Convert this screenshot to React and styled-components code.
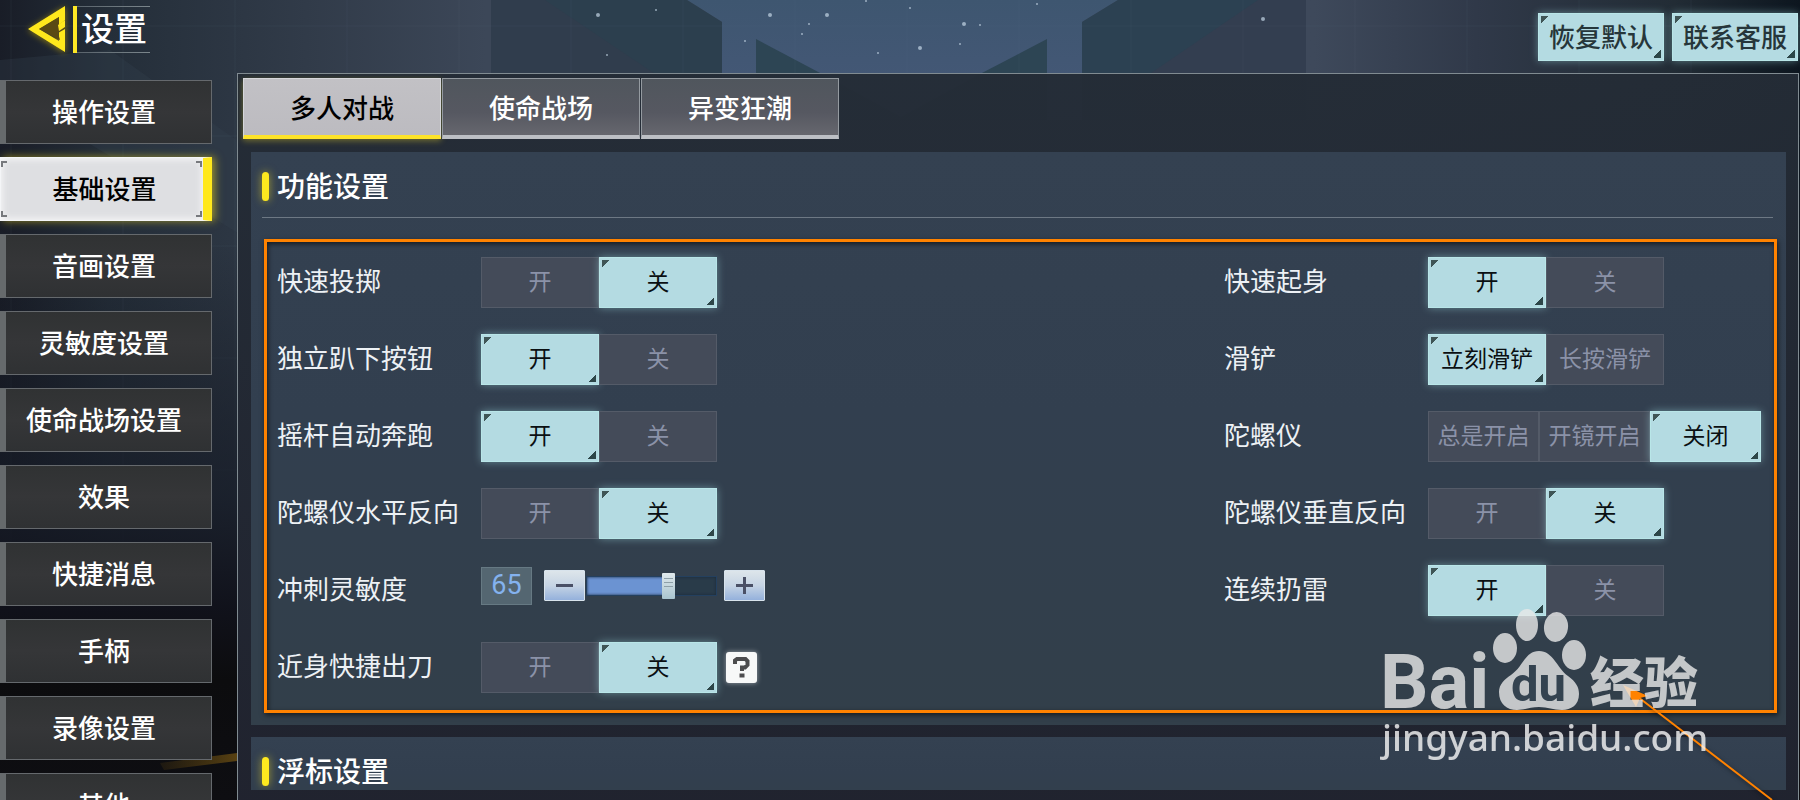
import React, { useId, useState } from "react";
import styled, { createGlobalStyle, css } from "styled-components";

const Global = createGlobalStyle`
  *, *::before, *::after { box-sizing: border-box; }
  body {
    margin: 0;
    background: #11141c;
    color: #fff;
    font-family: "Noto Sans CJK SC", sans-serif;
    overflow: hidden;
  }
  button { font: inherit; color: inherit; margin: 0; padding: 0; cursor: pointer; }
`;

const Page = styled.div`
  position: relative;
  z-index: 0;
  display: flex;
  flex-direction: column;
  height: 100vh;
  overflow: hidden;
`;

const Backdrop = styled.svg`
  position: absolute;
  inset: 0;
  z-index: -1;
  width: 100%;
  height: 100%;
`;

const Header = styled.header`
  display: flex;
  align-items: flex-start;
  justify-content: space-between;
  height: 73px;
  flex: none;
  padding: 0 2px 0 22px;
`;

const BackButton = styled.button`
  display: flex;
  align-items: center;
  gap: 2px;
  height: 58px;
  background: none;
  border: 0;
`;

const Title = styled.h1`
  width: 77px;
  height: 47px;
  margin: 0;
  padding-left: 1px;
  border-left: 4px solid #fde725;
  font-size: 33px;
  line-height: 42px;
  font-weight: 500;
  white-space: nowrap;
  background:
    linear-gradient(90deg, #59636b, #7b868c) top / 100% 1px no-repeat,
    linear-gradient(90deg, #59636b, #7b868c) bottom / 100% 1px no-repeat;
`;

const HeaderActions = styled.div`
  display: flex;
  gap: 8px;
  padding-top: 13px;
`;

const lit = css`
  color: #0a0f12;
  background:
    linear-gradient(135deg, #3f5556 50%, transparent 50%) 2px 2px / 8px 8px no-repeat,
    linear-gradient(315deg, #2d4648 50%, transparent 50%) calc(100% - 2px) calc(100% - 2px) / 8px 8px no-repeat,
    #b4dbe2;
  border: 1px solid #b9e6e8;
  box-shadow: 0 0 8px rgba(165, 225, 230, 0.45);
`;

const ActionButton = styled.button`
  ${lit}
  && { color: #26363a; }
  width: 126px;
  height: 48px;
  padding-bottom: 2px;
  font-size: 26px;
  line-height: 44px;
  font-weight: 500;
  white-space: nowrap;
`;

const Body = styled.div`
  display: flex;
  flex: 1;
  min-height: 0;
  gap: 25px;
`;

const Sidebar = styled.nav`
  display: flex;
  flex-direction: column;
  gap: 13px;
  width: 212px;
  flex: none;
  padding-top: 7px;
`;

const SideItem = styled.button`
  position: relative;
  height: 64px;
  flex: none;
  padding: 0 9px 3px 0;
  font-size: 26px;
  line-height: 58px;
  font-weight: 500;
  white-space: nowrap;
  border: 1px solid #65696d;
  border-left: 6px solid #666a6c;
  background: linear-gradient(#303233, #353638 50%, #2f3133);
  ${(p) =>
    p.$active &&
    css`
      color: #000;
      border: 1px solid #f4f5f7;
      border-right: 9px solid #ffe81c;
      padding: 0 0 3px 5px;
      background: #dedfe2;
      box-shadow: 3px 0 8px rgba(255, 228, 30, 0.5), inset 0 0 8px #fff;
    `}
`;

const Brackets = styled.svg`
  position: absolute;
  inset: 3px 1px 3px 0;
  width: calc(100% - 1px);
  height: calc(100% - 6px);
`;

const Panel = styled.main`
  display: flex;
  flex-direction: column;
  flex: 1;
  min-width: 0;
  margin-right: 1px;
  padding: 4px 12px 10px 5px;
  border: 1px solid #808b91;
  border-bottom: 0;
  background: linear-gradient(rgba(36, 44, 54, 0.97), rgba(33, 36, 48, 0.96));
`;

const Tabs = styled.div`
  display: flex;
  gap: 1px;
  flex: none;
`;

const Tab = styled.button`
  width: 198px;
  height: 61px;
  font-size: 26px;
  line-height: 54px;
  font-weight: 500;
  white-space: nowrap;
  border: 1px solid #949aa0;
  border-bottom: 4px solid #bcbfc4;
  background: linear-gradient(#50565d, #565861 60%, #66676e);
  ${(p) =>
    p.$active &&
    css`
      color: #000;
      border-color: #d6d7da;
      border-bottom-color: #fde328;
      background: linear-gradient(#c2c1c5, #bcbbc0);
      box-shadow: 0 2px 6px rgba(253, 227, 40, 0.35);
    `}
`;

const Sections = styled.div`
  display: flex;
  flex-direction: column;
  gap: 12px;
  flex: 1;
  min-height: 0;
  overflow: hidden;
  margin: 13px 0 0 8px;
`;

const Section = styled.section`
  flex: none;
  padding: 0 9px 12px 11px;
  background: linear-gradient(#344151, #323f4f 45%, #323f4a);
`;

const SectionHeader = styled.header`
  display: flex;
  align-items: center;
  gap: 8px;
  height: 66px;
  margin-right: 4px;
  padding-top: 3px;
  border-bottom: 1px solid #6d7884;
  &::before {
    content: "";
    width: 7px;
    height: 29px;
    border-radius: 4px;
    background: #fee91f;
    box-shadow: 0 0 8px rgba(254, 225, 31, 0.55);
  }
`;

const SectionTitle = styled.h2`
  margin: 0;
  padding-bottom: 3px;
  font-size: 28px;
  line-height: 36px;
  font-weight: 500;
`;

const Settings = styled.div`
  display: grid;
  grid-template-columns: minmax(0, 1fr) 540px;
  grid-auto-rows: 51px;
  row-gap: 26px;
  margin: 21px 0 0 2px;
  padding: 15px 10px 17px;
  border: 3px solid #ff8200;
  box-shadow: 1px 2px 5px rgba(0, 0, 0, 0.6), inset 1px 2px 5px rgba(0, 0, 0, 0.6);
`;

const Row = styled.div`
  display: flex;
  align-items: center;
  min-width: 0;
`;

const RowLabel = styled.label`
  width: 204px;
  flex: none;
  padding-bottom: 5px;
  font-size: 26px;
  line-height: 36px;
  font-weight: 400;
  color: #edf1f5;
  white-space: nowrap;
`;

const Segments = styled.div`
  display: flex;
`;

const Segment = styled.label`
  position: relative;
  width: ${(p) => p.$width}px;
  height: 51px;
  text-align: center;
  font-size: 23px;
  line-height: 45px;
  white-space: nowrap;
  color: #8b92a8;
  background: #444b59;
  border: 1px solid #545b68;
  ${(p) => p.$on && lit}
`;

const Radio = styled.input`
  position: absolute;
  inset: 0;
  width: 100%;
  height: 100%;
  margin: 0;
  appearance: none;
  cursor: pointer;
`;

const SliderGroup = styled.div`
  display: flex;
  align-items: center;
  padding-bottom: 10px;
`;

const ValueBox = styled.output`
  width: 51px;
  height: 38px;
  margin-right: 12px;
  text-align: center;
  font-family: Roboto, "Liberation Sans", sans-serif;
  font-size: 27px;
  line-height: 35px;
  color: #84b2ee;
  background: #546671;
  border: 1px solid #667983;
`;

const StepButton = styled.button`
  display: grid;
  place-items: center;
  width: 41px;
  height: 31px;
  border: 1px solid #d8e3ec;
  border-radius: 1px;
  background: linear-gradient(#dde5ea, #c6d4e4 50%, #94b1dc);
`;

const Range = styled.input`
  appearance: none;
  width: 131px;
  height: 26px;
  margin: 0 7px 0 1px;
  background: transparent;
  &::-webkit-slider-runnable-track {
    height: 20px;
    border: 1px solid #24405f;
    box-shadow: inset 0 0 3px #1b2a3a;
    background: linear-gradient(90deg, #6b93d2 ${(p) => p.value}%, #293b49 ${(p) => p.value}%);
  }
  &::-webkit-slider-thumb {
    appearance: none;
    width: 13px;
    height: 26px;
    margin-top: -4px;
    border-radius: 1px;
    background:
      linear-gradient(#8ea0a8, #8ea0a8) center 5px / 9px 1px no-repeat,
      linear-gradient(#8ea0a8, #8ea0a8) center 9px / 9px 1px no-repeat,
      linear-gradient(#8ea0a8, #8ea0a8) center 13px / 9px 1px no-repeat,
      linear-gradient(#e0e9ec, #a9c4cf);
  }
`;

const HelpButton = styled.button`
  display: grid;
  place-items: center;
  width: 31px;
  height: 31px;
  margin-left: 9px;
  border: 0;
  border-radius: 3px;
  background: #f7f8f8;
  box-shadow: 0 0 5px rgba(255, 255, 255, 0.5);
`;

const Overlay = styled.svg`
  position: absolute;
  right: 0;
  bottom: 0;
  pointer-events: none;
`;

const menu = ["操作设置", "基础设置", "音画设置", "灵敏度设置", "使命战场设置", "效果", "快捷消息", "手柄", "录像设置", "其他"];
const modes = ["多人对战", "使命战场", "异变狂潮"];
const onOff = ["开", "关"];
const settings = [
  { label: "快速投掷", options: onOff, initial: 1 },
  { label: "快速起身", options: onOff, initial: 0 },
  { label: "独立趴下按钮", options: onOff, initial: 0 },
  { label: "滑铲", options: ["立刻滑铲", "长按滑铲"], initial: 0 },
  { label: "摇杆自动奔跑", options: onOff, initial: 0 },
  { label: "陀螺仪", options: ["总是开启", "开镜开启", "关闭"], initial: 2 },
  { label: "陀螺仪水平反向", options: onOff, initial: 1 },
  { label: "陀螺仪垂直反向", options: onOff, initial: 1 },
  { label: "冲刺灵敏度", slider: 65 },
  { label: "连续扔雷", options: onOff, initial: 0 },
  { label: "近身快捷出刀", options: onOff, initial: 1, help: true },
];

const stars = [
  [598, 15], [656, 10], [607, 55], [770, 15], [809, 24], [802, 34], [827, 15], [866, 1], [745, 41],
  [964, 24], [980, 25], [1037, 4], [920, 48], [910, 8], [878, 53], [1263, 19], [960, 44],
];

function Scene() {
  return (
    <Backdrop viewBox="0 0 1800 800" preserveAspectRatio="none" aria-hidden="true">
      <defs>
        <linearGradient id="wall" x1="0" x2="1">
          <stop offset="0" stopColor="#191d27" />
          <stop offset="0.06" stopColor="#242e39" />
          <stop offset="0.17" stopColor="#313b49" />
          <stop offset="0.27" stopColor="#3c4758" />
          <stop offset="0.73" stopColor="#3e495b" />
          <stop offset="0.82" stopColor="#303949" />
          <stop offset="0.93" stopColor="#222c35" />
          <stop offset="1" stopColor="#0d161f" />
        </linearGradient>
        <linearGradient id="sky" x1="0" x2="0" y1="0" y2="1">
          <stop offset="0" stopColor="#3e5670" />
          <stop offset="1" stopColor="#465878" />
        </linearGradient>
        <linearGradient id="floor" x1="0" x2="0" y1="0" y2="1">
          <stop offset="0.3" stopColor="#11131b" stopOpacity="0" />
          <stop offset="0.62" stopColor="#151a25" stopOpacity="0.75" />
          <stop offset="0.76" stopColor="#10111a" stopOpacity="0.98" />
          <stop offset="0.85" stopColor="#0c0c0e" />
          <stop offset="1" stopColor="#0e0e12" />
        </linearGradient>
        <linearGradient id="streak" x1="0" x2="1">
          <stop offset="0" stopColor="#5b4310" stopOpacity="0.2" />
          <stop offset="1" stopColor="#6b4e12" stopOpacity="0.8" />
        </linearGradient>
      </defs>
      <rect width="1800" height="800" fill="url(#wall)" />
      <path d="M0 60 L110 50 L250 150 L250 240 L0 90Z" fill="#364350" opacity="0.3" />
      <path d="M687 0 H1118 L1082 22 V120 H722 V22Z" fill="url(#sky)" />
      <path d="M491 0 H687 L722 22 V120 H491Z" fill="#2c3f4e" />
      <path d="M491 0 H545 L670 84 V120 H491Z" fill="#303d4d" />
      <path d="M1306 0 H1118 L1082 22 V120 H1306Z" fill="#2c4152" />
      <path d="M1306 0 H1258 L1135 84 V120 H1306Z" fill="#333e50" />
      <path d="M756 39 L822 74 L901 117 L980 74 L1047 39 V120 H756Z" fill="#2d4554" />
      <g stroke="#6b8296" strokeOpacity="0.1">
        {Array.from({ length: 19 }, (_, i) => (
          <path key={i} d={`M${11 + i * 112} 0V800`} />
        ))}
        <path d="M0 26H1800M0 136H1800M0 246H1800M0 358H1800M0 470H1800" />
      </g>
      {stars.map(([x, y], i) => (
        <circle key={i} cx={x} cy={y} r={i % 3 ? 1 : 2} fill="#c4d6e6" opacity="0.7" />
      ))}
      <rect width="1800" height="800" fill="url(#floor)" />
      <path d="M160 763 L237 753 V761 L164 770Z" fill="url(#streak)" />
    </Backdrop>
  );
}

function ToggleRow({ label, options, initial, help }) {
  const [value, setValue] = useState(initial);
  const id = useId();
  return (
    <Row role="radiogroup" aria-labelledby={id}>
      <RowLabel as="span" id={id}>{label}</RowLabel>
      <Segments>
        {options.map((option, i) => (
          <Segment key={option} $on={value === i} $width={options.length > 2 ? 111 : 118}>
            <Radio type="radio" name={id} checked={value === i} onChange={() => setValue(i)} />
            {option}
          </Segment>
        ))}
      </Segments>
      {help && (
        <HelpButton aria-label="帮助">
          <svg width="19" height="23" viewBox="0 0 19 23">
            <path d="M3 8V4.500L5 3H13.500L15.500 5V9L13 11.500H10V15" fill="none" stroke="#4c4c4e" strokeWidth="4" />
            <path d="M7.500 17.500H12.500V21.500H7.500Z" fill="#4c4c4e" />
          </svg>
        </HelpButton>
      )}
    </Row>
  );
}

function SliderRow({ label, slider }) {
  const [value, setValue] = useState(slider);
  const id = useId();
  return (
    <Row>
      <RowLabel htmlFor={id}>{label}</RowLabel>
      <SliderGroup>
        <ValueBox htmlFor={id}>{value}</ValueBox>
        <StepButton aria-label="减少" onClick={() => setValue(Math.max(0, value - 1))}>
          <svg width="17" height="17"><path d="M0 8.500H17" stroke="#4a5066" strokeWidth="3" /></svg>
        </StepButton>
        <Range id={id} type="range" min="0" max="100" value={value} onChange={(e) => setValue(Number(e.target.value))} />
        <StepButton aria-label="增加" onClick={() => setValue(Math.min(100, value + 1))}>
          <svg width="17" height="17"><path d="M0 8.500H17M8.500 0V17" stroke="#4a5066" strokeWidth="3" /></svg>
        </StepButton>
      </SliderGroup>
    </Row>
  );
}

function Watermark() {
  return (
    <Overlay width="440" height="200" viewBox="0 0 440 200" aria-hidden="true">
      <g style={{ filter: "drop-shadow(1px 2px 2px rgba(0,0,0,.5))" }}>
        <path d="M278 97 L412 200" stroke="#ff8200" strokeWidth="2" />
        <path d="M263 85 L288 96 L280 98 L276 107Z" fill="#ff8200" />
      </g>
      <g fill="#e9e9e9" opacity="0.8">
        <text x="20" y="108" fontFamily="Roboto, sans-serif" fontWeight="700" fontSize="76">Bai</text>
        <ellipse cx="145" cy="48" rx="12" ry="15" />
        <ellipse cx="167" cy="25" rx="11" ry="16" />
        <ellipse cx="196" cy="27" rx="12" ry="15" transform="rotate(8 196 27)" />
        <ellipse cx="214" cy="55" rx="12" ry="15" />
        <path d="M179 51 C193 51 197 68 208 76 C216 82 219 87 219 94 C219 105 211 110 202 110 C193 110 188 107 179 107 C170 107 165 110 157 110 C147 110 139 104 139 92 C139 84 145 79 151 75 C163 67 165 51 179 51Z" />
        <text x="230" y="103" fontFamily="Noto Sans CJK SC, sans-serif" fontWeight="900" fontSize="54">经验</text>
        <text x="22" y="151" fill="#f8f8f8" fontFamily="Noto Sans, sans-serif" fontWeight="500" fontSize="37">jingyan.baidu.com</text>
      </g>
      <text x="151" y="101" fill="#344350" fontFamily="Roboto, sans-serif" fontWeight="700" fontSize="49">du</text>
    </Overlay>
  );
}

export default function App() {
  const [page, setPage] = useState(1);
  const [mode, setMode] = useState(0);
  return (
    <Page>
      <Global />
      <Scene />
      <Header>
        <BackButton>
          <svg width="49" height="58" viewBox="0 0 49 58" aria-hidden="true">
            <defs>
              <filter id="glow" x="-30%" y="-30%" width="160%" height="160%">
                <feDropShadow dx="0" dy="1" stdDeviation="3" floodColor="#d9b800" floodOpacity="0.6" />
              </filter>
            </defs>
            <path filter="url(#glow)" fillRule="evenodd" fill="#ffe81f" d="M43 6V52L6 29Z M37 17L17 29L37 41V29L42 24L37 27Z" />
            <path d="M37 17V25L43 20V29L36 33L38 40L17 29Z" fill="#594a14" />
            <path d="M43 20L36 25L37 31L43 27Z" fill="#ffe81f" />
          </svg>
          <Title>设置</Title>
        </BackButton>
        <HeaderActions>
          <ActionButton>恢复默认</ActionButton>
          <ActionButton>联系客服</ActionButton>
        </HeaderActions>
      </Header>
      <Body>
        <Sidebar>
          {menu.map((item, i) => (
            <SideItem key={item} $active={page === i} aria-current={page === i ? "page" : undefined} onClick={() => setPage(i)}>
              {item}
              {page === i && (
                <Brackets viewBox="0 0 201 56" preserveAspectRatio="none" fill="none" stroke="#77797d" strokeWidth="2">
                  <path d="M1 6V1H6M195 1H200V6M200 50V55H195M6 55H1V50" />
                </Brackets>
              )}
            </SideItem>
          ))}
        </Sidebar>
        <Panel>
          <Tabs role="tablist">
            {modes.map((item, i) => (
              <Tab key={item} role="tab" aria-selected={mode === i} $active={mode === i} onClick={() => setMode(i)}>
                {item}
              </Tab>
            ))}
          </Tabs>
          <Sections>
            <Section>
              <SectionHeader><SectionTitle>功能设置</SectionTitle></SectionHeader>
              <Settings>
                {settings.map((s) =>
                  s.options ? <ToggleRow key={s.label} {...s} /> : <SliderRow key={s.label} {...s} />
                )}
              </Settings>
            </Section>
            <Section>
              <SectionHeader><SectionTitle>浮标设置</SectionTitle></SectionHeader>
            </Section>
          </Sections>
        </Panel>
      </Body>
      <Watermark />
    </Page>
  );
}
